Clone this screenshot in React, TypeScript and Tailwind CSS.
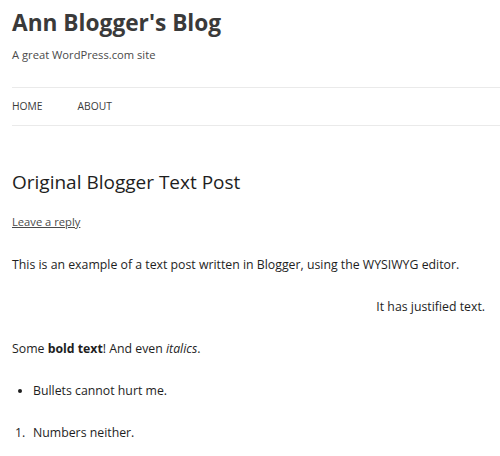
export default function App() {
  return (
    <div className="min-h-[456px] w-[500px] overflow-hidden bg-white font-['Open_Sans',sans-serif] text-[#333]">
      <header className="pl-3 pt-[8px]">
        <h1 className="text-[22.7px] font-bold leading-[30px] text-[#3a3a3a]">Ann Blogger's Blog</h1>
        <p className="mt-[8px] text-[11.2px] leading-[18px] text-[#4a4a4a]">A great WordPress.com site</p>
      </header>

      <nav className="ml-3 mt-[23px] border-y border-[#eaeaea]">
        <ul className="flex h-[37px] items-center gap-[35px] text-[10.3px] uppercase text-[#3a3a3a]">
          <li>Home</li>
          <li>About</li>
        </ul>
      </nav>

      <article className="pl-3 pr-[15px] pt-[43px]">
        <h2 className="text-[19px] font-normal leading-[26px] text-[#1e1e1e]">Original Blogger Text Post</h2>
        <a className="mt-[19px] block text-[11.2px] leading-[16px] text-[#4a4a4a] underline">Leave a reply</a>
        <div className="mt-[26px] space-y-[24px] text-[12.3px] leading-[18px] text-[#1e1e1e]">
          <p>This is an example of a text post written in Blogger, using the WYSIWYG editor.</p>
          <p className="text-right">It has justified text.</p>
          <p>
            Some <b>bold text</b>! And even <i>italics</i>.
          </p>
          <ul className="list-disc pl-[21px]">
            <li>Bullets cannot hurt me.</li>
          </ul>
          <ol className="pl-[3px]">
            <li className="flex">
              <span className="w-[18px]">1.</span>
              <span>Numbers neither.</span>
            </li>
          </ol>
        </div>
      </article>
    </div>
  );
}
